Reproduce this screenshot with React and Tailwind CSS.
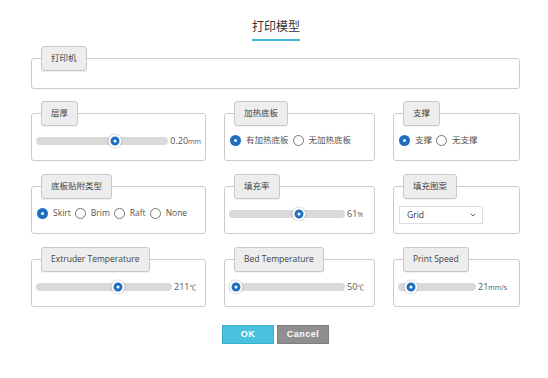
import { ChevronDown } from 'lucide-react';

const font = { fontFamily: '"Open Sans", "Noto Sans CJK SC", sans-serif' };

const Field = ({ label, children, height = 'h-[48px]' }) => (
    <div className="flex flex-col">
        <div className="relative z-10 self-start ml-[10px] h-[25px] px-[9px] flex items-center bg-[#ededed] border border-[#c8c8c8] rounded-[3px] shadow-[0_1px_1px_rgba(0,0,0,0.06)] text-[8.5px] text-[#444] whitespace-nowrap">
            {label}
        </div>
        <div className={`-mt-[13px] ${height} border border-[#cbcbcb] rounded-[3px] bg-white pt-[20px] px-[4px]`}>
            {children}
        </div>
    </div>
);

const Slider = ({ width, pos, value, unit }) => (
    <div className="flex items-center h-[13px] gap-[2px]">
        <div className={`relative ${width} h-[8px] rounded-full bg-[#d9d9d9]`}>
            <div className="absolute top-1/2 -translate-y-1/2 -translate-x-1/2 w-[13px] h-[13px] rounded-full bg-[#1f70bf] border-2 border-white shadow-[0_0_1px_1px_rgba(0,0,0,0.12)] flex items-center justify-center"
                style={{ left: pos }}>
                <div className="w-[3px] h-[3px] rounded-full bg-white"></div>
            </div>
        </div>
        <span className="text-[9px] text-[#555] leading-none whitespace-nowrap">
            {value}<span className="text-[7px]">{unit}</span>
        </span>
    </div>
);

const Radio = ({ checked, label }) => (
    <div className="flex items-center gap-[5px]">
        {checked ? (
            <div className="w-[11px] h-[11px] rounded-full bg-[#1f6fbf] flex items-center justify-center">
                <div className="w-[3px] h-[3px] rounded-full bg-white"></div>
            </div>
        ) : (
            <div className="w-[11px] h-[11px] rounded-full border border-[#777] bg-white"></div>
        )}
        <span className="text-[8.5px] text-[#555] leading-none">{label}</span>
    </div>
);

const RadioGroup = ({ options, selected }) => (
    <div className="flex items-center h-[13px] gap-[4px] pl-[1px]">
        {options.map((o, i) => <Radio key={i} checked={i === selected} label={o} />)}
    </div>
);

export default function App() {
    return (
        <div className="w-[548px] h-[378px] bg-white" style={font}>
            {/* Title */}
            <div className="pt-[19px] flex justify-center">
                <div className="ml-[4px] text-[12px] leading-[16px] text-[#333] pb-[4px] border-b-2 border-[#3dbcd6]">打印模型</div>
            </div>

            <div className="ml-[31px] w-[489px] mt-[5px]">
                {/* Printer */}
                <Field label="打印机" height="h-[31px]" />

                <div className="grid grid-cols-[175px_151px_1fr] gap-x-[18px] gap-y-[13px] mt-[12px]">
                    <Field label="层厚">
                        <Slider width="w-[136px]" pos="60%" value="0.20" unit="mm" />
                    </Field>
                    <Field label="加热底板">
                        <RadioGroup options={['有加热底板', '无加热底板']} selected={0} />
                    </Field>
                    <Field label="支撑">
                        <RadioGroup options={['支撑', '无支撑']} selected={0} />
                    </Field>

                    <Field label="底板贴附类型">
                        <RadioGroup options={['Skirt', 'Brim', 'Raft', 'None']} selected={0} />
                    </Field>
                    <Field label="填充率">
                        <Slider width="w-[116px]" pos="60%" value="61" unit="%" />
                    </Field>
                    <Field label="填充图案">
                        <div className="-mt-[1px] ml-[1px] w-[84px] h-[18px] border border-[#dedede] bg-white flex items-center justify-between pl-[7px] pr-[5px] text-[8.5px] text-[#333]">
                            <span>Grid</span>
                            <ChevronDown size={8} strokeWidth={2.5} className="text-[#444]" />
                        </div>
                    </Field>

                    <Field label="Extruder Temperature">
                        <Slider width="w-[136px]" pos="60%" value="211" unit="℃" />
                    </Field>
                    <Field label="Bed Temperature">
                        <Slider width="w-[116px]" pos="7px" value="50" unit="℃" />
                    </Field>
                    <Field label="Print Speed">
                        <Slider width="w-[78px]" pos="17%" value="21" unit="mm/s" />
                    </Field>
                </div>
            </div>

            {/* Buttons */}
            <div className="mt-[18px] ml-[222px] flex gap-[3px]">
                <button className="w-[52px] h-[19px] bg-[#47c1dc] border border-[#3aaec8] text-white font-bold text-[9px] tracking-[0.5px]"
                    style={{ fontFamily: '"Liberation Sans", Arial, sans-serif' }}>OK</button>
                <button className="w-[52px] h-[19px] bg-[#8f8f8f] border border-[#7f7f7f] text-white font-bold text-[9px] tracking-[0.5px]"
                    style={{ fontFamily: '"Liberation Sans", Arial, sans-serif' }}>Cancel</button>
            </div>
        </div>
    );
}
